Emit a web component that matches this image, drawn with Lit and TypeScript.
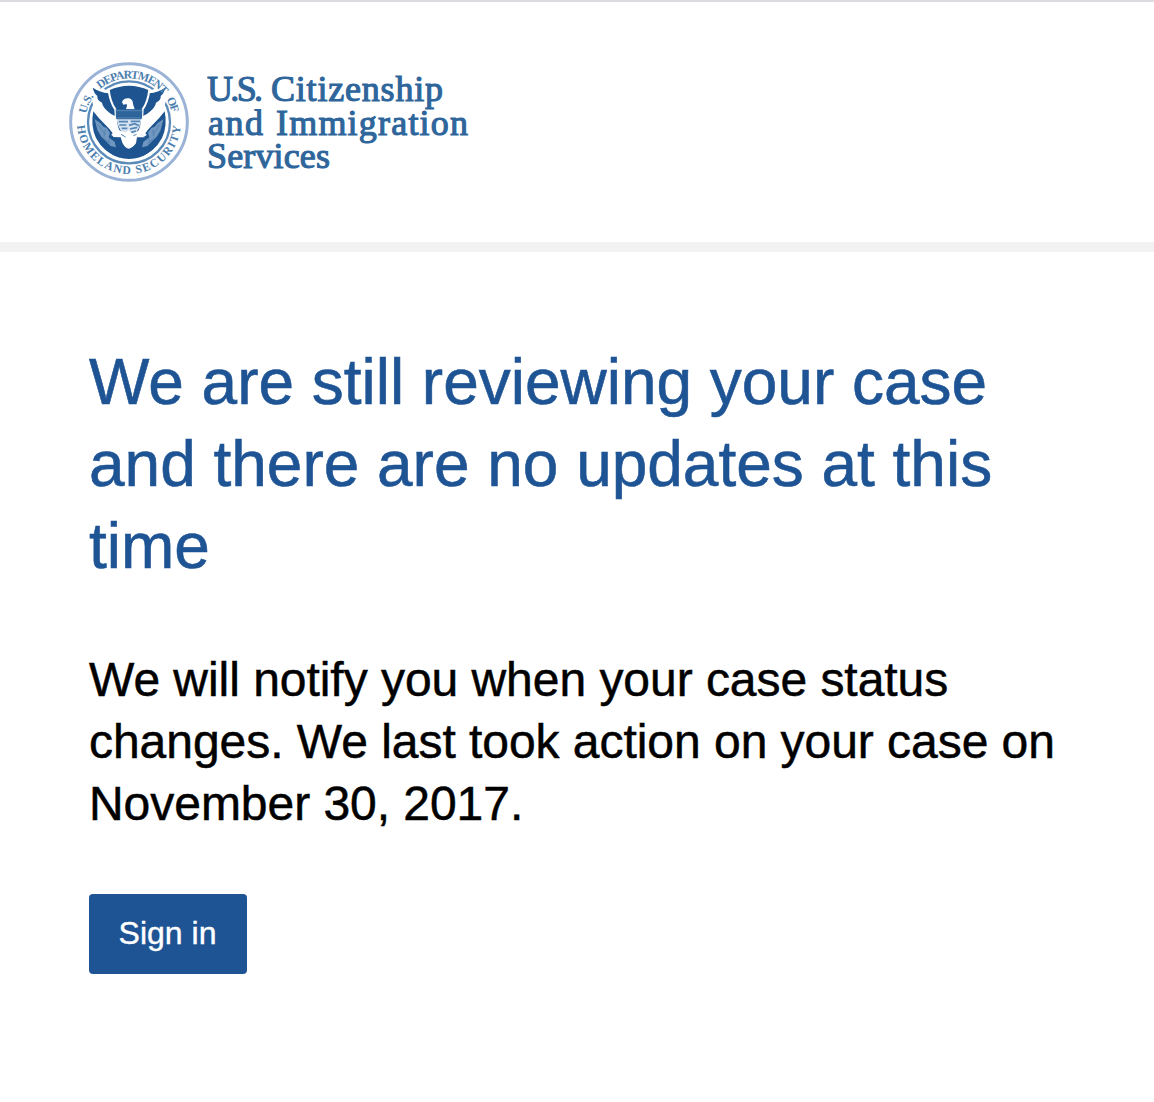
import { LitElement, html, svg, css } from 'lit';
import { customElement, property } from 'lit/decorators.js';

@customElement('dhs-seal')
export class DhsSeal extends LitElement {

	renderWing() {
		return svg`
			<path class="white" d="M78 84 L134 104 L150 150 L172 226 L150 242 L134 232 L118 204 L92 168 L84 132 Z"/>
			<path class="navy" d="M86 95 Q108 109 134 112 Q137 138 155 154 L153 180 Q140 175 130 165 Q116 152 114 140 Q98 132 100 120 Q90 112 86 95 Z"/>
			<path class="navy" d="M88 166 Q104 188 124 206 Q138 219 146 232 L136 243 L160 250 Q170 256 174 282 L168 304 Q120 292 96 246 Q79 210 88 166 Z"/>
			<path class="leaf" d="M92 190 L108 200 L118 212 L128 216 L138 230 L134 244 L152 258 L156 274 L140 270 L126 256 L112 242 L100 222 Z"/>
			<path class="vein" d="M102 206 L124 236 M114 244 L140 262 M124 220 L120 242 M138 246 L132 262"/>
		`;
	}

	render() {
		return html`
			<svg viewBox="15 18 360 360" role="img" aria-label="Department of Homeland Security">
				<defs>
					<path id="top" d="M64 198 A131 131 0 0 1 326 198"/>
					<path id="bottom" d="M39 198 A156 156 0 0 0 351 198"/>
				</defs>
				<circle class="rim" cx="195" cy="198" r="175"/>
				<circle class="ring" cx="195" cy="199" r="123"/>
				<path class="navy" d="M102 247 Q195 200 288 247 Q260 307 195 309 Q130 307 102 247 Z"/>
				${this.renderWing()}
				<g transform="matrix(-1 0 0 1 390 0)">${this.renderWing()}</g>
				<path class="panel" d="M134 100 Q195 72 256 100 Q252 138 236 160 L234 192 Q230 242 195 252 Q160 242 156 192 L154 160 Q138 138 134 100 Z"/>
				<path class="white" d="M174 138 Q179 125 195 127 Q207 130 207 144 L212 160 L186 160 Q191 150 188 144 L178 146 Z"/>
				<path class="chief" d="M155 160 L235 160 L234 188 L156 188 Z"/>
				<path class="seam" d="M156 164 H234 M157 186 H233"/>
				<path class="shield" d="M158 190 H232 Q229 226 195 248 Q162 226 158 190 Z"/>
				<path class="stripes" d="M164 197 H192 M200 196 H228 M166 207 H187 M195 208 L212 203 L226 209 M173 217 H190 M198 219 L220 214 M199 230 L216 225"/>
				<path class="white" d="M146 243 L166 223 L184 230 L195 222 L206 235 L220 225 L242 244 L219 244 L216 262 Q205 277 195 278 Q183 276 175 260 L170 244 Z"/>
				<path class="vein" d="M171 235 L185 243 M208 239 L218 235"/>
				<text><textPath href="#top" startOffset="25" textLength="58">U.S.</textPath></text>
				<text><textPath href="#top" startOffset="111" textLength="214">DEPARTMENT</textPath></text>
				<text><textPath href="#top" startOffset="340" textLength="44">OF</textPath></text>
				<text><textPath href="#bottom" startOffset="11" textLength="466">HOMELAND SECURITY</textPath></text>
			</svg>
		`;
	}

	static styles = css`

		:host, svg {
			display: block;
			width: 120px;
			height: 120px;
		}

		.navy { fill: #1e5591; }
		.white { fill: #fff; }
		.leaf { fill: #7097bf; }
		.chief { fill: #2e649c; }
		.shield { fill: #d6e3ef; }

		.panel {
			fill: #1e5591;
			stroke: #fff;
			stroke-width: 6;
		}

		.rim {
			fill: #fff;
			stroke: #9ab3d6;
			stroke-width: 9;
		}

		.ring {
			fill: none;
			stroke: #5c8bb9;
			stroke-width: 7;
		}

		.seam, .vein, .stripes {
			fill: none;
			stroke: #5484b2;
			stroke-width: 3;
		}

		.stripes {
			stroke: #5385b7;
			stroke-width: 5;
		}

		text {
			font: bold 35px "Liberation Serif", serif;
			fill: #4b7eae;
		}
	`;
}

@customElement('uscis-header')
export class UscisHeader extends LitElement {

	render() {
		return html`
			<dhs-seal></dhs-seal>
			<svg class="name" viewBox="0 0 266 120">
				<text y="39"><tspan x="0" textLength="56">U.S.</tspan> <tspan x="64" textLength="172">Citizenship</tspan></text>
				<text y="73"><tspan x="1" textLength="55">and</tspan> <tspan x="69" textLength="192">Immigration</tspan></text>
				<text y="106"><tspan x="0" textLength="123">Services</tspan></text>
			</svg>
		`;
	}

	static styles = css`

		:host {
			display: flex;
			gap: 18px;
			box-sizing: border-box;
			height: 252px;
			padding: 60px 69px 0;
			border-top: 2px solid #dcdbe0;
			border-bottom: 10px solid #f2f2f2;
		}

		.name {
			width: 266px;
			height: 120px;
		}

		text {
			font: 36px "Liberation Serif", serif;
			fill: #2e659b;
			stroke: #2e659b;
			stroke-width: 1.1px;
		}
	`;
}

@customElement('app-root')
export class AppRoot extends LitElement {

	@property({ type: String }) status = 'We are still reviewing your case and there are no updates at this time';
	@property({ type: String }) lastAction = 'November 30, 2017';

	render() {
		return html`
			<uscis-header></uscis-header>
			<main>
				<h1>${this.status}</h1>
				<p>We will notify you when your case status changes. We last took action on your case on ${this.lastAction}.</p>
				<button>Sign in</button>
			</main>
		`;
	}

	static styles = css`

		:host {
			display: block;
			min-height: 1102px;
			background: #fff;
			font-family: "Liberation Sans", Arial, sans-serif;
		}

		main {
			padding: 89px 89px 0;
		}

		h1 {
			margin: 0;
			color: #1e5494;
			font-size: 64px;
			font-weight: normal;
			line-height: 82px;
			letter-spacing: -0.02px;
			-webkit-text-stroke: 0.6px;
		}

		p {
			margin: 62px 0 0;
			color: #000;
			font-size: 48px;
			line-height: 62px;
			letter-spacing: -0.04px;
			-webkit-text-stroke: 0.5px;
		}

		button {
			display: block;
			width: 158px;
			height: 80px;
			margin-top: 59px;
			padding: 0 1px 2px 0;
			border: 0;
			border-radius: 4px;
			background: #1e5494;
			color: #fff;
			font: 32px "Liberation Sans", Arial, sans-serif;
			-webkit-text-stroke: 0.4px;
		}
	`;
}
